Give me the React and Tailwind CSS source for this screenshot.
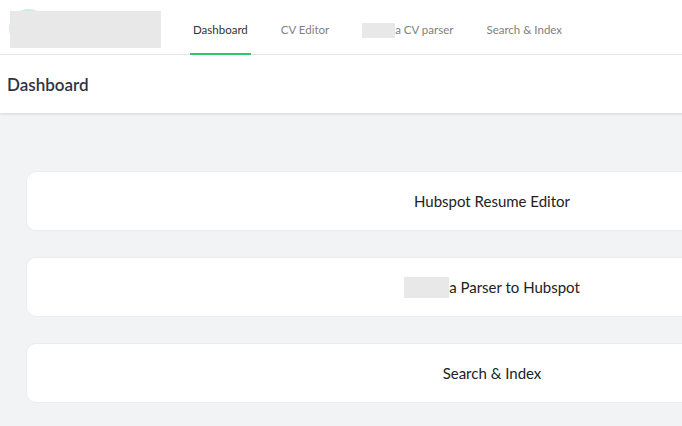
import React from "react";

const tabs = [
  { label: "Dashboard", active: true },
  { label: "CV Editor" },
  { label: "a CV parser", masked: true },
  { label: "Search & Index" },
];

const cards = [
  { label: "Hubspot Resume Editor" },
  { label: "a Parser to Hubspot", masked: true },
  { label: "Search & Index" },
];

export default function App() {
  return (
    <div
      className="w-full h-screen overflow-hidden bg-[#f2f3f5]"
      style={{ fontFamily: "Lato, 'Open Sans', sans-serif" }}
    >
      <div className="w-[984px]">
        {/* top nav */}
        <nav className="h-[55px] bg-white border-b border-[#ebebeb] flex items-stretch">
          <div className="relative w-[190px] pt-[11px] pl-[10px]">
            <div className="absolute left-[9px] top-[9px] w-[39px] h-[39px] rounded-full bg-[#c4f2da]"></div>
            <div className="relative w-[151px] h-[37px] bg-[#e8e8e8]"></div>
          </div>
          <div className="flex items-stretch">
            {tabs.map((t) => (
              <div
                key={t.label}
                className={`relative flex items-center pt-[6px] px-[3px] mr-[27px] text-[11.5px] ${
                  t.active ? "text-[#333]" : "text-[#808080]"
                }`}
              >
                {t.masked && <span className="w-[33px] h-[15px] bg-[#e8e8e8] inline-block"></span>}
                <span>{t.label}</span>
                {t.active && (
                  <span className="absolute left-0 right-0 bottom-[-1px] h-[2px] bg-[#2ecc71]"></span>
                )}
              </div>
            ))}
          </div>
        </nav>

        {/* page header */}
        <header className="h-[58px] bg-white flex items-center px-[7px] shadow-[0_1px_3px_rgba(0,0,0,0.12)] relative">
          <h1 className="text-[17px] font-semibold text-[#2f3542] pt-[1px]">Dashboard</h1>
        </header>

        {/* cards */}
        <main className="pt-[58px] px-[26px] flex flex-col gap-[26px]">
          {cards.map((c) => (
            <div
              key={c.label}
              className="h-[60px] bg-white rounded-[10px] border border-[#ececef] flex items-center justify-center text-[15px] text-[#222]"
            >
              {c.masked && <span className="w-[45px] h-[21px] bg-[#e8e8e8] inline-block"></span>}
              <span>{c.label}</span>
            </div>
          ))}
        </main>
      </div>
    </div>
  );
}
